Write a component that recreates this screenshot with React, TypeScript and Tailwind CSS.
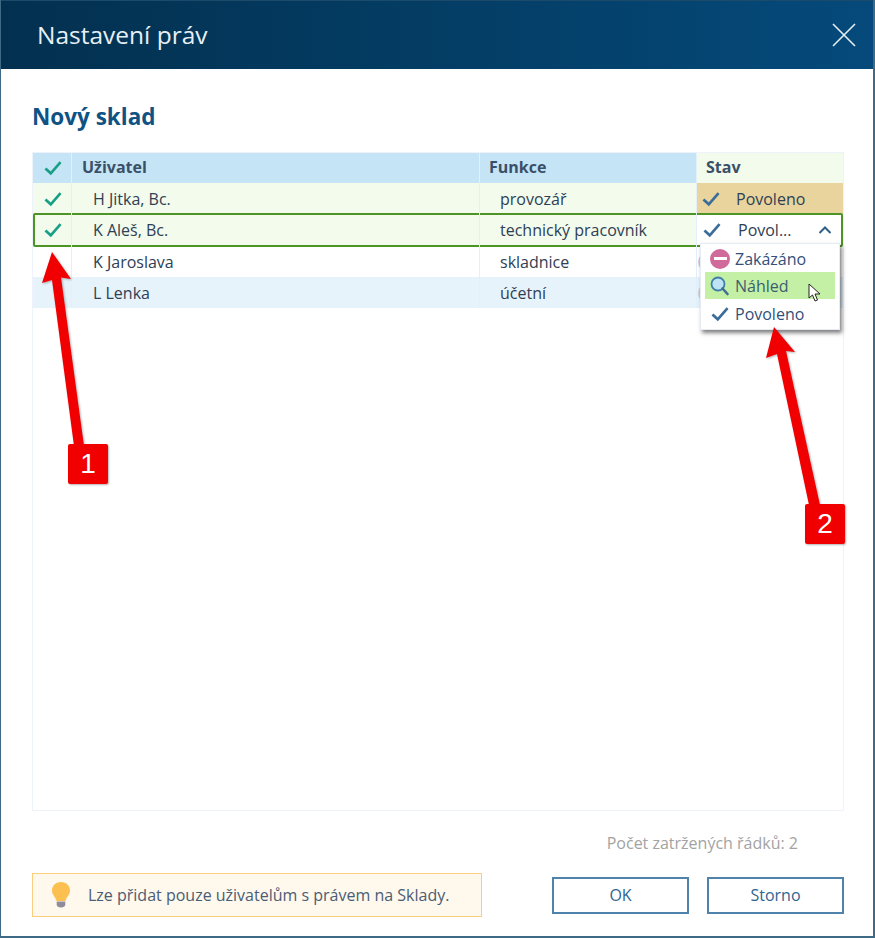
import React from 'react'

type Row = { name: string; role: string; checked: boolean; tone: string }

const ROWS: Row[] = [
  { name: 'H Jitka, Bc.', role: 'provozář', checked: true, tone: 'bg-[#f2fbec]' },
  { name: 'K Aleš, Bc.', role: 'technický pracovník', checked: true, tone: 'bg-[#f2fbec]' },
  { name: 'K Jaroslava', role: 'skladnice', checked: false, tone: 'bg-white' },
  { name: 'L Lenka', role: 'účetní', checked: false, tone: 'bg-[#e6f3fb]' },
]

function Check({ color = '#17a085', className = 'w-[18px] h-[16px]' }: { color?: string; className?: string }) {
  return (
    <svg viewBox="0 0 20 18" className={className} fill="none">
      <path d="M1.5 9.5 L7.5 15 L18.5 2.5" stroke={color} strokeWidth="3" />
    </svg>
  )
}

function Bulb() {
  return (
    <svg viewBox="0 0 20 28" className="w-[20px] h-[28px]">
      <path d="M10 1 C4.5 1 1 5 1 9.5 C1 14 4.5 15.5 5.5 20 L14.5 20 C15.5 15.5 19 14 19 9.5 C19 5 15.5 1 10 1 Z" fill="#fbc04f" />
      <path d="M5.7 20.5 H14.3 V23.5 C14.3 25.5 12.5 26.5 10 26.5 C7.5 26.5 5.7 25.5 5.7 23.5 Z" fill="#8f8c9c" />
    </svg>
  )
}

function Magnifier() {
  return (
    <svg viewBox="0 0 20 20" className="w-[20px] h-[20px]" fill="none">
      <circle cx="8" cy="8" r="6.5" fill="#bfe3f5" stroke="#3f7fa8" strokeWidth="1.8" />
      <path d="M12.5 12.5 L17.5 18" stroke="#3f6f96" strokeWidth="2.6" strokeLinecap="round" />
    </svg>
  )
}

function Cursor() {
  return (
    <svg viewBox="0 0 13 19" className="absolute left-[807px] top-[283px] w-[13px] h-[19px]">
      <path d="M1 1 L1 15 L4.5 12 L7 18 L9.5 17 L7 11 L12 11 Z" fill="#fff" stroke="#222" strokeWidth="1" />
    </svg>
  )
}

// červené šipky a číselné štítky ležící přes dialog
function Callouts() {
  return (
    <>
      <svg viewBox="0 0 875 938" className="absolute -left-px top-0 w-[875px] h-[938px] pointer-events-none drop-shadow-[1px_1px_1px_rgba(0,0,0,0.3)]">
        <path d="M52 252 L71 279 L61 277.5 L84 446 L74 446 L52 280 L42 283 Z" fill="#f00000" />
        <path d="M774 327 L795 352 L786 351 L820 505 L809 505 L777 354 L766 358 Z" fill="#f00000" />
      </svg>
      <div className="absolute left-[67px] top-[444px] w-[40px] h-[40px] rounded-[2px] bg-[#f00000] text-white text-[28px] leading-[40px] text-center shadow-[1px_1px_2px_rgba(0,0,0,0.3)] [font-family:'Liberation_Sans',sans-serif]">
        1
      </div>
      <div className="absolute left-[804px] top-[504px] w-[40px] h-[40px] rounded-[2px] bg-[#f00000] text-white text-[28px] leading-[40px] text-center shadow-[1px_1px_2px_rgba(0,0,0,0.3)] [font-family:'Liberation_Sans',sans-serif]">
        2
      </div>
    </>
  )
}

function Dropdown() {
  return (
    <div className="absolute left-[699px] top-[243px] w-[140px] h-[87px] bg-white border border-[#e6ecf5] shadow-[2px_3px_4px_rgba(0,0,0,0.5)] pt-[1px] text-[16px] text-[#33507a]">
      <div className="flex items-center h-[27px] pl-[9px] gap-[5px]">
        <span className="w-[20px] h-[20px] rounded-full bg-[#cf6a9a] flex items-center justify-center">
          <span className="w-[13px] h-[3px] bg-white" />
        </span>
        <span>Zakázáno</span>
      </div>
      <div className="flex items-center h-[27px] ml-[4px] w-[130px] pl-[5px] gap-[5px] bg-[#c4f0a6] text-[#3a6070]">
        <Magnifier />
        <span>Náhled</span>
      </div>
      <div className="flex items-center h-[28px] pt-[2px] pl-[10px] gap-[6px]">
        <Check color="#3a6c9c" />
        <span>Povoleno</span>
      </div>
    </div>
  )
}

export default function App() {
  return (
    <div className="relative w-[875px] h-[938px] flex flex-col bg-white border-l border-r-2 border-b-2 border-[#3f6a85] text-[16px] text-[#2f4054] [font-family:'Open_Sans',sans-serif] overflow-hidden">
      <header className="h-[69px] -mr-[2px] -ml-[1px] shrink-0 flex items-center justify-between pl-[37px] pr-[19px] border-t border-[#1c4a6b] bg-gradient-to-r from-[#03304f] to-[#054a7b]">
        <h1 className="text-[24.5px] text-[#e6eff5]">Nastavení práv</h1>
        <svg viewBox="0 0 24 24" className="w-[24px] h-[24px]" fill="none">
          <path d="M1 1 L23 23 M23 1 L1 23" stroke="#e6eff5" strokeWidth="1.6" />
        </svg>
      </header>

      <main className="flex-1 flex flex-col pl-[31px] pr-[29px]">
        <h2 className="mt-[33px] h-[50px] text-[22.5px] leading-[30px] font-bold text-[#0f5384]">Nový sklad</h2>

        <div className="h-[659px] border border-[#eef3fb]">
          <div className="grid grid-cols-[39px_408px_217px_146px] h-[30px] font-bold text-[#3a5068]">
            <div className="bg-[#c5e4f6] border-r border-[#e3effa] flex items-center justify-center pl-[2px]"><Check /></div>
            <div className="bg-[#c5e4f6] border-r border-[#e3effa] flex items-center pl-[10px] pb-[2px]">Uživatel</div>
            <div className="bg-[#c5e4f6] border-r border-[#e3effa] flex items-center pl-[9px] pb-[2px]">Funkce</div>
            <div className="bg-[#f2fbec] flex items-center pl-[9px] pb-[2px]">Stav</div>
          </div>

          {ROWS.map((row, i) => (
            <div
              key={row.name}
              className={
                i === 1
                  ? 'grid grid-cols-[37px_408px_217px_144px] h-[34px] -my-[1px] relative border-2 border-[#4c9425] rounded-[2px] bg-[#f2fbec]'
                  : 'grid grid-cols-[39px_408px_217px_146px] h-[31px] ' + row.tone
              }
            >
              <div className={i === 1 ? '-my-[2px] border-r border-[#e3effa] flex items-center justify-center' : 'border-r border-[#e3effa] flex items-center justify-center pl-[2px]'}>
                {row.checked && <Check />}
              </div>
              <div className={i === 1 ? '-my-[2px] border-r border-[#e3effa] flex items-center pl-[21px]' : 'border-r border-[#e3effa] flex items-center pl-[21px]'}>{row.name}</div>
              <div className={i === 1 ? '-my-[2px] border-r border-[#e3effa] flex items-center pl-[20px]' : 'border-r border-[#e3effa] flex items-center pl-[20px]'}>{row.role}</div>
              {i === 0 && (
                <div className="bg-[#e8d49c] flex items-center pl-[5px] gap-[16px]">
                  <Check color="#3a6c9c" />
                  <span>Povoleno</span>
                </div>
              )}
              {i === 1 && (
                <div className="bg-white flex items-center pl-[6px] gap-[17px]">
                  <Check color="#3a6c9c" />
                  <span className="w-[62px] whitespace-nowrap">Povol...</span>
                  <svg viewBox="0 0 14 10" className="ml-px w-[14px] h-[10px]" fill="none">
                    <path d="M1.5 8 L7 2.5 L12.5 8" stroke="#2f5f8a" strokeWidth="2" />
                  </svg>
                </div>
              )}
              {i > 1 && (
                <div className="flex items-center pl-[1px]">
                  <span className={i === 2 ? 'w-[20px] h-[20px] rounded-full bg-[#dcc4d0]' : 'w-[20px] h-[20px] rounded-full bg-[#cfcdd4]'} />
                </div>
              )}
            </div>
          ))}
        </div>

        <p className="mt-[22px] h-[20px] pr-[46px] text-right leading-[20px] text-[#a3a3a3]">Počet zatržených řádků: 2</p>

        <div className="mt-[20px] flex items-center justify-between">
          <div className="w-[450px] h-[44px] flex items-center pl-[18px] gap-[17px] bg-[#fff8ec] border border-[#fbcd7f] text-[#4a5d75]">
            <Bulb />
            <span>Lze přidat pouze uživatelům s právem na Sklady.</span>
          </div>
          <div className="flex gap-[18px]">
            <button className="w-[137px] h-[37px] border-2 border-[#4f83ab] text-[#2f6590]">OK</button>
            <button className="w-[137px] h-[37px] border-2 border-[#4f83ab] text-[#2f6590]">Storno</button>
          </div>
        </div>
      </main>

      <Dropdown />
      <Cursor />
      <Callouts />
    </div>
  )
}
